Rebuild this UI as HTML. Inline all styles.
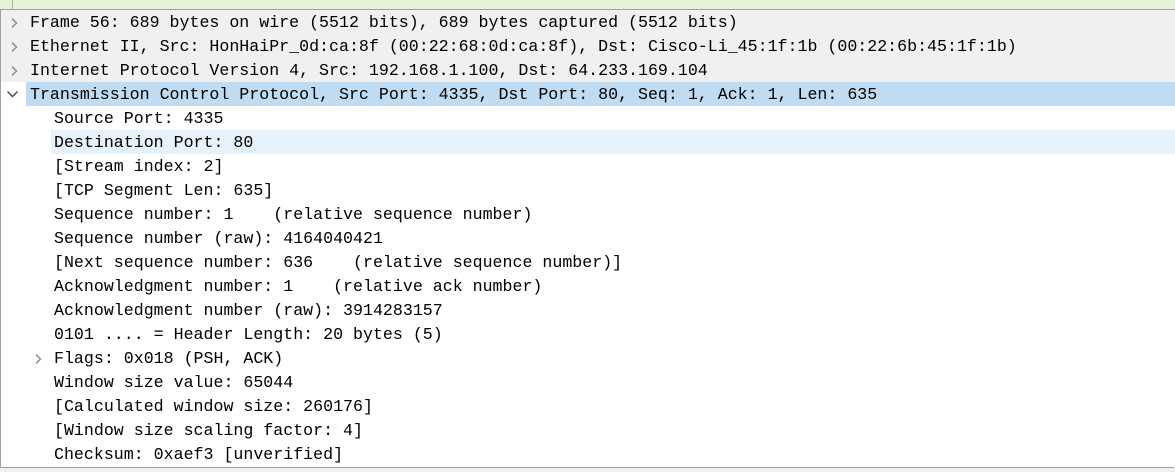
<!DOCTYPE html>
<html><head><style>
body{margin:0;width:1175px;height:472px;overflow:hidden;background:#fff;position:relative;font-family:"Liberation Mono",monospace;font-size:16.63px;color:#000}
.top{position:absolute;left:0;top:0;width:1175px;height:9px;background:#e6f2d6;border-bottom:1px solid #a0a0a0}
.top i{position:absolute;left:12px;top:0;width:1px;height:9px;background:#b0b0b0}
.frame{position:absolute;left:0;top:10px;width:1173px;height:457px;border-left:1px solid #a0a0a0;border-bottom:1px solid #a0a0a0}
.bot{position:absolute;left:0;top:468px;width:1175px;height:4px;background:#f0f0f0}
.r{position:absolute;height:24px;line-height:26px;white-space:pre;left:0;right:0}
.g{background:#f0f0f0}
.sel{background:#c0dcf3;left:26px}
.hl{background:#e5f1fb;left:51px}
.t{position:absolute}
svg{position:absolute}
</style></head><body>
<div class="top"><i></i></div>
<div class="frame"></div>
<div class="r g" style="top:10px;left:1px"><svg style="left:8px;top:7px" width="10" height="12"><path d="M3 1.5l4.5 4.5-4.5 4.5" fill="none" stroke="#888" stroke-width="1.4"/></svg><span class="t" style="left:29px">Frame 56: 689 bytes on wire (5512 bits), 689 bytes captured (5512 bits)</span></div>
<div class="r g" style="top:34px;left:1px"><svg style="left:8px;top:7px" width="10" height="12"><path d="M3 1.5l4.5 4.5-4.5 4.5" fill="none" stroke="#888" stroke-width="1.4"/></svg><span class="t" style="left:29px">Ethernet II, Src: HonHaiPr_0d:ca:8f (00:22:68:0d:ca:8f), Dst: Cisco-Li_45:1f:1b (00:22:6b:45:1f:1b)</span></div>
<div class="r g" style="top:58px;left:1px"><svg style="left:8px;top:7px" width="10" height="12"><path d="M3 1.5l4.5 4.5-4.5 4.5" fill="none" stroke="#888" stroke-width="1.4"/></svg><span class="t" style="left:29px">Internet Protocol Version 4, Src: 192.168.1.100, Dst: 64.233.169.104</span></div>
<svg style="left:6px;top:89px" width="14" height="10"><path d="M1.5 2.5l5 5 5-5" fill="none" stroke="#444" stroke-width="1.4"/></svg>
<div class="r sel" style="top:82px"><span class="t" style="left:4px">Transmission Control Protocol, Src Port: 4335, Dst Port: 80, Seq: 1, Ack: 1, Len: 635</span></div>
<div class="r" style="top:106px"><span class="t" style="left:54px">Source Port: 4335</span></div>
<div class="r hl" style="top:130px"><span class="t" style="left:3px">Destination Port: 80</span></div>
<div class="r" style="top:154px"><span class="t" style="left:54px">[Stream index: 2]</span></div>
<div class="r" style="top:178px"><span class="t" style="left:54px">[TCP Segment Len: 635]</span></div>
<div class="r" style="top:202px"><span class="t" style="left:54px">Sequence number: 1    (relative sequence number)</span></div>
<div class="r" style="top:226px"><span class="t" style="left:54px">Sequence number (raw): 4164040421</span></div>
<div class="r" style="top:250px"><span class="t" style="left:54px">[Next sequence number: 636    (relative sequence number)]</span></div>
<div class="r" style="top:274px"><span class="t" style="left:54px">Acknowledgment number: 1    (relative ack number)</span></div>
<div class="r" style="top:298px"><span class="t" style="left:54px">Acknowledgment number (raw): 3914283157</span></div>
<div class="r" style="top:322px"><span class="t" style="left:54px">0101 .... = Header Length: 20 bytes (5)</span></div>
<div class="r" style="top:346px"><svg style="left:33px;top:7px" width="10" height="12"><path d="M3 1.5l4.5 4.5-4.5 4.5" fill="none" stroke="#888" stroke-width="1.4"/></svg><span class="t" style="left:54px">Flags: 0x018 (PSH, ACK)</span></div>
<div class="r" style="top:370px"><span class="t" style="left:54px">Window size value: 65044</span></div>
<div class="r" style="top:394px"><span class="t" style="left:54px">[Calculated window size: 260176]</span></div>
<div class="r" style="top:418px"><span class="t" style="left:54px">[Window size scaling factor: 4]</span></div>
<div class="r" style="top:442px"><span class="t" style="left:54px">Checksum: 0xaef3 [unverified]</span></div>
<div class="bot"></div>
</body></html>
